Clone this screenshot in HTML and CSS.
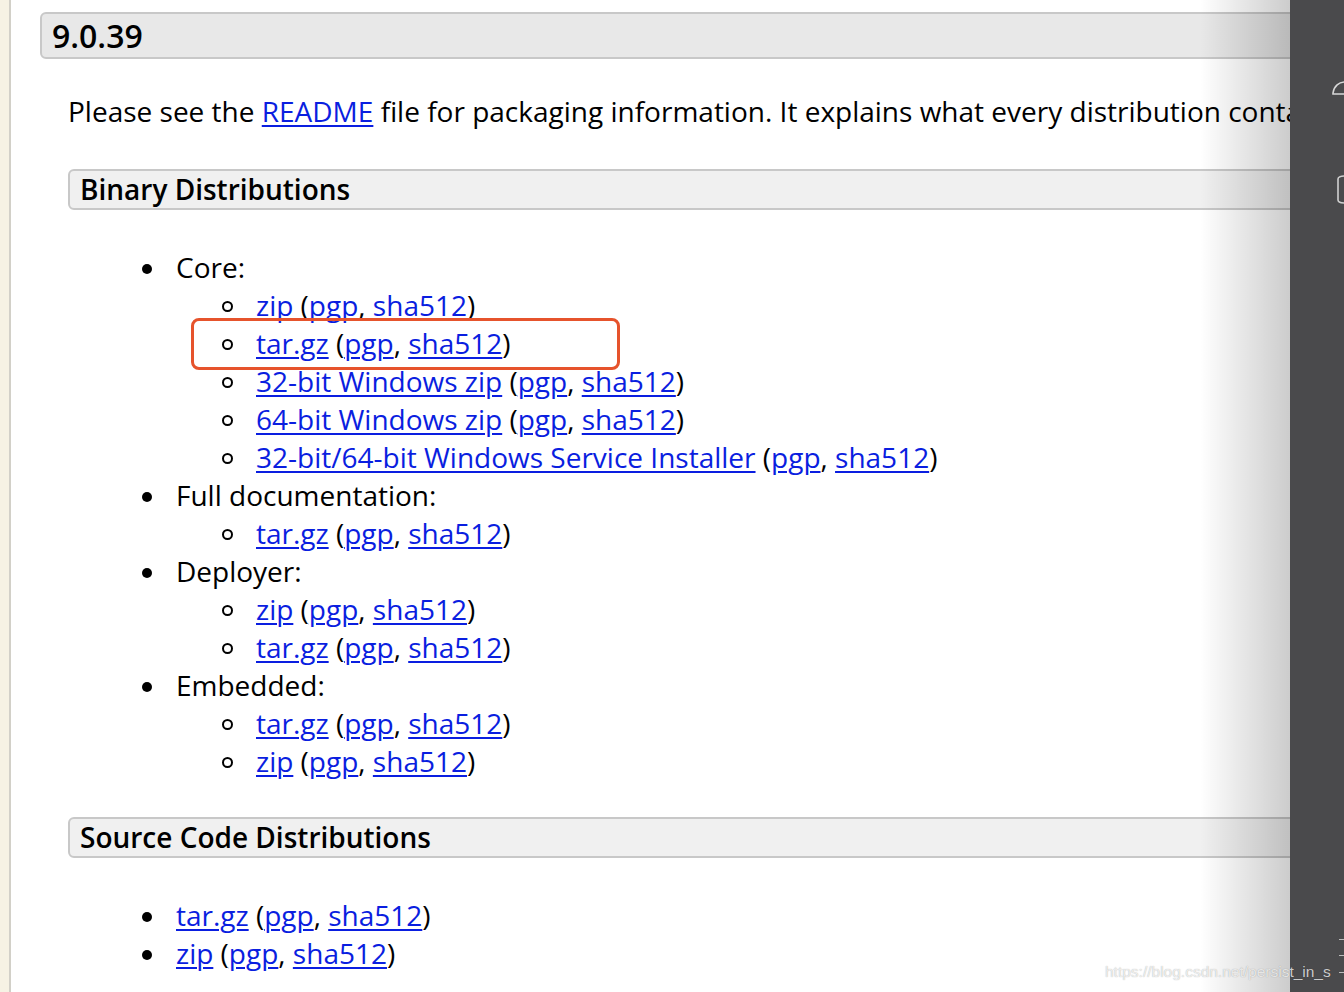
FILE: index.html
```html
<!DOCTYPE html>
<html>
<head>
<meta charset="utf-8">
<title>Apache Tomcat 9.0.39</title>
<link rel="stylesheet" href="styles.css">
</head>
<body>
<div class="page">
  <div class="leftstrip"></div>
  <div class="main">
    <h3 class="ver">9.0.39</h3>
    <div class="section">
      <p class="intro">Please see the <a href="#">README</a> file for packaging information. It explains what every distribution conta</p>
      <h4 class="sub">Binary Distributions</h4>
      <ul class="l1">
        <li>Core:
          <ul class="l2">
            <li><a href="#">zip</a> (<a href="#">pgp</a>, <a href="#">sha512</a>)</li>
            <li><a href="#">tar.gz</a> (<a href="#">pgp</a>, <a href="#">sha512</a>)</li>
            <li><a href="#">32-bit Windows zip</a> (<a href="#">pgp</a>, <a href="#">sha512</a>)</li>
            <li><a href="#">64-bit Windows zip</a> (<a href="#">pgp</a>, <a href="#">sha512</a>)</li>
            <li><a href="#">32-bit/64-bit Windows Service Installer</a> (<a href="#">pgp</a>, <a href="#">sha512</a>)</li>
          </ul>
        </li>
        <li>Full documentation:
          <ul class="l2">
            <li><a href="#">tar.gz</a> (<a href="#">pgp</a>, <a href="#">sha512</a>)</li>
          </ul>
        </li>
        <li>Deployer:
          <ul class="l2">
            <li><a href="#">zip</a> (<a href="#">pgp</a>, <a href="#">sha512</a>)</li>
            <li><a href="#">tar.gz</a> (<a href="#">pgp</a>, <a href="#">sha512</a>)</li>
          </ul>
        </li>
        <li>Embedded:
          <ul class="l2">
            <li><a href="#">tar.gz</a> (<a href="#">pgp</a>, <a href="#">sha512</a>)</li>
            <li><a href="#">zip</a> (<a href="#">pgp</a>, <a href="#">sha512</a>)</li>
          </ul>
        </li>
      </ul>
      <h4 class="sub sub2">Source Code Distributions</h4>
      <ul class="l1 src">
        <li><a href="#">tar.gz</a> (<a href="#">pgp</a>, <a href="#">sha512</a>)</li>
        <li><a href="#">zip</a> (<a href="#">pgp</a>, <a href="#">sha512</a>)</li>
      </ul>
    </div>
    <div class="shade"></div>
  </div>
  <div class="panel">
    <svg class="ic1" width="14" height="24" viewBox="0 0 14 24"><path d="M14 6 C8 6 3 10 2 17 L2 18 L14 18" fill="none" stroke="#d8d8d8" stroke-width="1.6"/></svg>
    <svg class="ic2" width="8" height="34" viewBox="0 0 8 34"><path d="M8 4 C4 4 1 5 1 7 L1 28 C1 30 4 31 8 31" fill="none" stroke="#d0d0d0" stroke-width="1.6"/></svg>
    <span class="tick t1"></span>
    <span class="tick t2"></span>
    <span class="tick t3"></span>
  </div>
  <div class="redbox"></div>
  <div class="watermark">https://blog.csdn.net/persist_in_s</div>
</div>
</body>
</html>
```

FILE: styles.css
```css
html, body {
  margin: 0;
  padding: 0;
  background: #fff;
}
.page {
  position: relative;
  display: flex;
  width: 1344px;
  height: 992px;
  overflow: hidden;
  font-family: "Open Sans", "Noto Sans", sans-serif;
  color: #000;
}
.leftstrip {
  width: 9px;
  flex: none;
  background: #f6f2e4;
  border-right: 2px solid #d2d0c8;
}
.main {
  position: relative;
  flex: 1;
  overflow: hidden;
  padding-top: 12px;
  padding-left: 29px;
}
.ver {
  margin: 0 -30px 0 0;
  height: 43px;
  line-height: 43px;
  font-size: 32px;
  font-weight: 600;
  padding-left: 10px;
  background: #e8e8e8;
  border: 2px solid #c8c8c8;
  border-radius: 6px;
}
.section {
  padding-left: 28px;
}
.intro {
  margin: 33px 0 0 0;
  font-size: 28px;
  line-height: 38px;
  white-space: nowrap;
}
a {
  color: #0a1ee0;
  text-decoration: underline;
  text-underline-offset: 3px;
  text-decoration-thickness: 2px;
}
.sub {
  margin: 39px -30px 0 0;
  height: 37px;
  line-height: 37px;
  font-size: 28px;
  font-weight: 600;
  padding-left: 10px;
  background: #f0f0f0;
  border: 2px solid #c8c8c8;
  border-radius: 6px;
}
.sub2 {
  margin-top: 37px;
}
ul {
  list-style: none;
  margin: 0;
  padding: 0;
}
.l1 {
  margin-top: 38px;
  padding-left: 108px;
  font-size: 28px;
  line-height: 38px;
}
.l1.src {
  margin-top: 38px;
}
.l1 > li::before {
  content: "";
  display: inline-block;
  width: 10px;
  height: 10px;
  border-radius: 50%;
  background: #000;
  margin-left: -34px;
  margin-right: 24px;
  vertical-align: 4px;
}
.l2 {
  padding-left: 80px;
}
.l2 > li::before {
  content: "";
  display: inline-block;
  box-sizing: border-box;
  width: 11px;
  height: 11px;
  border-radius: 50%;
  border: 2px solid #000;
  background: transparent;
  margin-left: -34px;
  margin-right: 23px;
  vertical-align: 4px;
}
.shade {
  position: absolute;
  top: 0;
  right: 0;
  width: 90px;
  height: 100%;
  background: linear-gradient(to right, rgba(0,0,0,0), rgba(0,0,0,0.2));
  pointer-events: none;
}
.panel {
  position: relative;
  width: 54px;
  flex: none;
  background: #4a4a4c;
}
.ic1 {
  position: absolute;
  left: 41px;
  top: 76px;
}
.ic2 {
  position: absolute;
  left: 47px;
  top: 172px;
}
.tick {
  position: absolute;
  left: 49px;
  width: 5px;
  height: 1px;
  background: #bbb;
}
.t1 { top: 939px; }
.t2 { top: 955px; }
.t3 { top: 972px; }
.redbox {
  position: absolute;
  left: 191px;
  top: 318px;
  width: 423px;
  height: 46px;
  border: 3px solid #e6532c;
  border-radius: 8px;
  pointer-events: none;
}
.watermark {
  position: absolute;
  left: 1105px;
  top: 962px;
  font-family: "Liberation Sans", Arial, sans-serif;
  font-size: 15.5px;
  line-height: 20px;
  color: rgba(255,255,255,0.75);
  text-shadow: 0 0 1px rgba(0,0,0,0.35);
  white-space: nowrap;
}
```
